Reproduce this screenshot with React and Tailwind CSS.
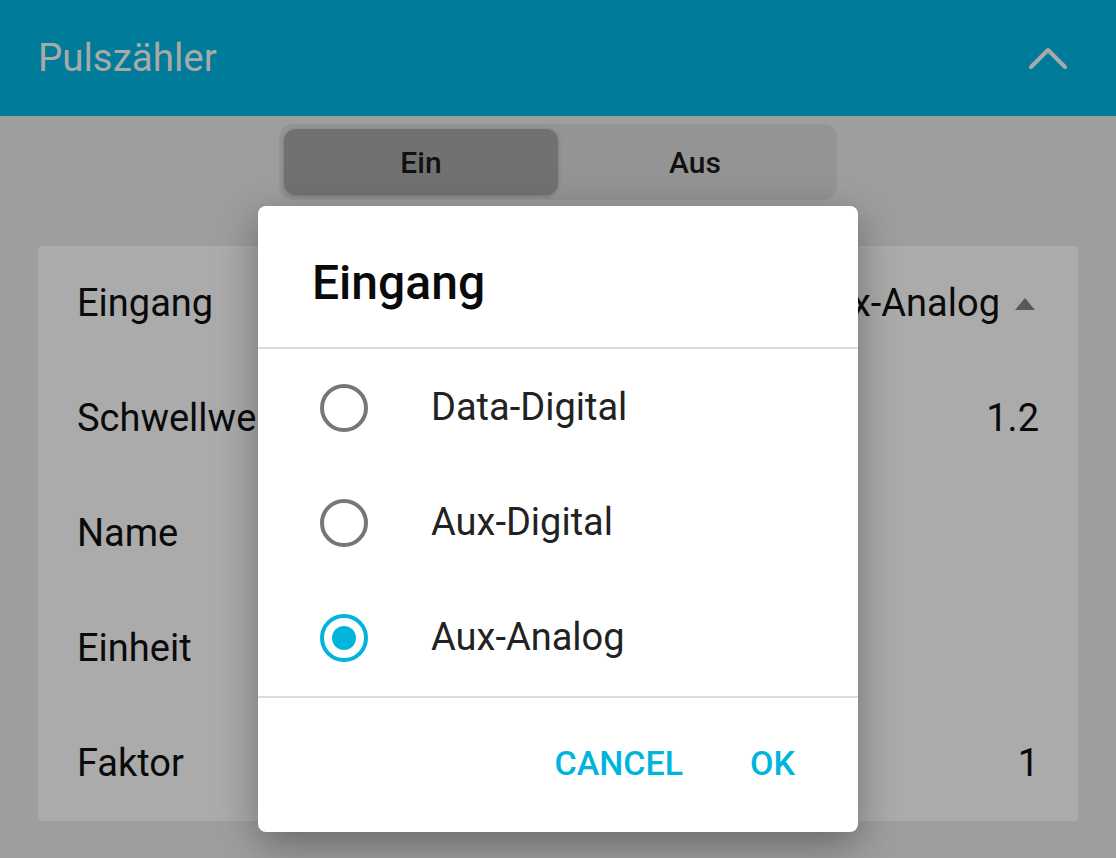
import React, { useState } from 'react';

const rows = [
  { label: 'Eingang', value: 'Aux-Analog', caret: true },
  { label: 'Schwellwert', value: '1.2' },
  { label: 'Name', value: '' },
  { label: 'Einheit', value: '' },
  { label: 'Faktor', value: '1' },
];

const options = ['Data-Digital', 'Aux-Digital', 'Aux-Analog'];

const Radio = ({ checked }) => (
  <span
    className={`flex h-[48px] w-[48px] shrink-0 items-center justify-center rounded-full border-[4px] ${
      checked ? 'border-[#00b4dc]' : 'border-[#767676]'
    }`}
  >
    {checked && <span className="h-[24px] w-[24px] rounded-full bg-[#00b4dc]" />}
  </span>
);

export default function App() {
  const [mode, setMode] = useState('ein');
  const [selected, setSelected] = useState('Aux-Analog');

  return (
    <div className="relative h-[858px] w-[1116px] overflow-hidden bg-[#9e9e9e] font-['Roboto',sans-serif]">
      <header className="flex h-[116px] items-center justify-between bg-[#007c9a] pl-[38px] pr-[48px]">
        <h1 className="text-[38.5px] text-[#a9a9a9]">Pulszähler</h1>
        <svg width="40" height="24" viewBox="0 0 40 24" fill="none">
          <path d="M3 21 L20 4 L37 21" stroke="#a9a9a9" strokeWidth="4" strokeLinecap="round" strokeLinejoin="round" />
        </svg>
      </header>

      <div className="flex justify-center pt-[8px]">
        <div className="flex h-[76px] w-[558px] rounded-[14px] bg-[#949494] p-[5px]">
          <button
            onClick={() => setMode('ein')}
            className={`flex-1 rounded-[12px] text-[30px] font-medium text-[#111] ${
              mode === 'ein' ? 'bg-[#717171] shadow-[0_1px_4px_rgba(0,0,0,0.2)]' : ''
            }`}
          >
            Ein
          </button>
          <button
            onClick={() => setMode('aus')}
            className={`flex-1 rounded-[12px] text-[30px] font-medium text-[#111] ${
              mode === 'aus' ? 'bg-[#717171] shadow-[0_1px_4px_rgba(0,0,0,0.2)]' : ''
            }`}
          >
            Aus
          </button>
        </div>
      </div>

      <div className="mx-[38px] mt-[46px] flex flex-col rounded-[4px] bg-[#ababab] px-[39px]">
        {rows.map((r) => (
          <div key={r.label} className="flex h-[115px] items-center justify-between text-[38px] text-[#0a0a0a]">
            <span>{r.label}</span>
            <span className="flex items-center">
              {r.value}
              {r.caret && (
                <svg className="ml-[14px] mr-[3px]" width="22" height="14" viewBox="0 0 22 14">
                  <path d="M11 1 L21 13 L1 13 Z" fill="#585858" />
                </svg>
              )}
            </span>
          </div>
        ))}
      </div>

      <div className="absolute left-[258px] top-[206px] flex h-[626px] w-[600px] flex-col rounded-[8px] bg-white shadow-[0_12px_40px_rgba(0,0,0,0.35)]">
        <div className="flex h-[143px] items-center border-b-2 border-[#dcdcdc] px-[54px] pt-[12px]">
          <h2 className="text-[48px] font-medium text-[#0a0a0a]">Eingang</h2>
        </div>
        <div className="flex flex-col py-[1px]">
          {options.map((o) => (
            <button
              key={o}
              onClick={() => setSelected(o)}
              className="flex h-[115px] items-center gap-[63px] px-[62px] text-left"
            >
              <Radio checked={selected === o} />
              <span className="text-[38px] text-[#222]">{o}</span>
            </button>
          ))}
        </div>
        <div className="flex flex-1 items-center justify-end gap-[67px] border-t-2 border-[#dcdcdc] pb-[4px] pr-[63px]">
          <button className="text-[34px] font-medium text-[#00b4dc]">CANCEL</button>
          <button className="text-[34px] font-medium text-[#00b4dc]">OK</button>
        </div>
      </div>
    </div>
  );
}
